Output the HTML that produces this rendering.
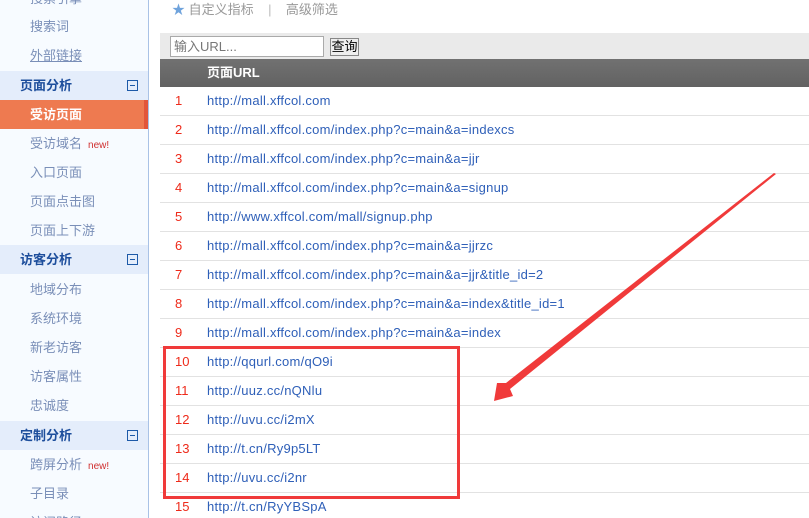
<!DOCTYPE html>
<html><head><meta charset="utf-8"><style>
*{margin:0;padding:0;box-sizing:border-box}
html,body{width:809px;height:518px;overflow:hidden}
body{background:#fff;font-family:"Liberation Sans","Noto Sans CJK SC",sans-serif;font-size:12px;position:relative}
#side{position:absolute;left:0;top:0;width:149px;height:518px;background:#f7fbff;border-right:1px solid #a9c2e6;overflow:hidden}
.it{position:absolute;left:30px;color:#7a8fb8;font-size:13px;line-height:29px;height:29px}
.hd{position:absolute;left:0;width:148px;height:29px;background:#e4edfb;color:#1d4e9c;font-weight:bold;font-size:13px;line-height:29px;padding-left:20px}
.hd i{position:absolute;right:10px;top:9px;width:11px;height:11px;border:1px solid #1d5aa8}
.hd i:after{content:"";position:absolute;left:2px;top:4px;width:5px;height:1px;background:#1d5aa8}
.act{position:absolute;left:0;top:100px;width:148px;height:29px;background:#ee7a50;color:#fff;font-weight:bold;font-size:13px;line-height:29px;padding-left:30px;border-right:4px solid #e2563a}
.new{color:#d03030;font-size:10px;margin-left:6px}
.row{position:absolute;left:160px;width:649px;height:29px;border-bottom:1px solid #e2e2e2;line-height:28px}
.row .n{position:absolute;left:15px;color:#ee2a1a;font-size:13px}
.row .u{position:absolute;left:47px;color:#2e5fb8;font-size:13px;letter-spacing:0.25px}
</style></head><body>
<div id="side">
<div class="it" style="top:-16px">搜索引擎</div>
<div class="it" style="top:12px">搜索词</div>
<div class="it" style="top:41px;text-decoration:underline">外部链接</div>
<div class="hd" style="top:71px">页面分析<i></i></div>
<div class="act">受访页面</div>
<div class="it" style="top:129px">受访域名<span class="new">new!</span></div>
<div class="it" style="top:158px">入口页面</div>
<div class="it" style="top:187px">页面点击图</div>
<div class="it" style="top:216px">页面上下游</div>
<div class="hd" style="top:245px">访客分析<i></i></div>
<div class="it" style="top:275px">地域分布</div>
<div class="it" style="top:304px">系统环境</div>
<div class="it" style="top:333px">新老访客</div>
<div class="it" style="top:362px">访客属性</div>
<div class="it" style="top:391px">忠诚度</div>
<div class="hd" style="top:421px">定制分析<i></i></div>
<div class="it" style="top:450px">跨屏分析<span class="new">new!</span></div>
<div class="it" style="top:479px">子目录</div>
<div class="it" style="top:508px">访问路径</div>
</div>
<div style="position:absolute;left:172px;top:2px;color:#999;font-size:13px;line-height:16px"><span style="color:#6fa3dc">★</span> 自定义指标 &nbsp;&nbsp;&nbsp;<span style="color:#bbb">|</span>&nbsp;&nbsp;&nbsp;&nbsp;高级筛选</div>
<div style="position:absolute;left:160px;top:33px;width:649px;height:26px;background:#eaeaea"></div>
<div style="position:absolute;left:170px;top:36px;width:154px;height:21px;border:1px solid #aaa;background:#fff;color:#777;font-size:13px;line-height:19px;padding-left:3px">输入URL...</div>
<div style="position:absolute;left:330px;top:38px;width:29px;height:18px;border:1px solid #888;background:#eee;color:#000;font-size:13px;line-height:16px;text-align:center">查询</div>
<div style="position:absolute;left:160px;top:59px;width:649px;height:28px;background:linear-gradient(#717171,#626262);color:#fff;font-weight:bold;font-size:13px;line-height:28px;padding-left:47px">页面URL</div>
<div class="row" style="top:87px"><span class="n">1</span><span class="u">http://mall.xffcol.com</span></div>
<div class="row" style="top:116px"><span class="n">2</span><span class="u">http://mall.xffcol.com/index.php?c=main&amp;a=indexcs</span></div>
<div class="row" style="top:145px"><span class="n">3</span><span class="u">http://mall.xffcol.com/index.php?c=main&amp;a=jjr</span></div>
<div class="row" style="top:174px"><span class="n">4</span><span class="u">http://mall.xffcol.com/index.php?c=main&amp;a=signup</span></div>
<div class="row" style="top:203px"><span class="n">5</span><span class="u">http://www.xffcol.com/mall/signup.php</span></div>
<div class="row" style="top:232px"><span class="n">6</span><span class="u">http://mall.xffcol.com/index.php?c=main&amp;a=jjrzc</span></div>
<div class="row" style="top:261px"><span class="n">7</span><span class="u">http://mall.xffcol.com/index.php?c=main&amp;a=jjr&amp;title_id=2</span></div>
<div class="row" style="top:290px"><span class="n">8</span><span class="u">http://mall.xffcol.com/index.php?c=main&amp;a=index&amp;title_id=1</span></div>
<div class="row" style="top:319px"><span class="n">9</span><span class="u">http://mall.xffcol.com/index.php?c=main&amp;a=index</span></div>
<div class="row" style="top:348px"><span class="n">10</span><span class="u">http://qqurl.com/qO9i</span></div>
<div class="row" style="top:377px"><span class="n">11</span><span class="u">http://uuz.cc/nQNlu</span></div>
<div class="row" style="top:406px"><span class="n">12</span><span class="u">http://uvu.cc/i2mX</span></div>
<div class="row" style="top:435px"><span class="n">13</span><span class="u">http://t.cn/Ry9p5LT</span></div>
<div class="row" style="top:464px"><span class="n">14</span><span class="u">http://uvu.cc/i2nr</span></div>
<div class="row" style="top:493px"><span class="n">15</span><span class="u">http://t.cn/RyYBSpA</span></div>
<div style="position:absolute;left:163px;top:346px;width:297px;height:153px;border:3px solid #f03a3a"></div>
<svg style="position:absolute;left:0;top:0" width="809" height="518">
<polygon points="776,174 774,173 506,383 497,383 494,401 513,396 510,389" fill="#f03a3a"/>
</svg>
</body></html>
